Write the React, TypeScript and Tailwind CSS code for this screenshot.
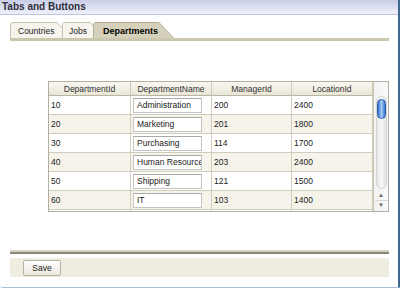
const rows = [
  { id: '10', name: 'Administration', mgr: '200', loc: '2400' },
  { id: '20', name: 'Marketing', mgr: '201', loc: '1800' },
  { id: '30', name: 'Purchasing', mgr: '114', loc: '1700' },
  { id: '40', name: 'Human Resources', mgr: '203', loc: '2400' },
  { id: '50', name: 'Shipping', mgr: '121', loc: '1500' },
  { id: '60', name: 'IT', mgr: '103', loc: '1400' },
  { id: '', name: '', mgr: '', loc: '' },
];

function Tab({ label, width, pad, active, overlap }: { label: string; width: number; pad: number; active?: boolean; overlap: number }) {
  const h = 16;
  return (
    <div className="relative h-[16px] shrink-0" style={{ width, marginLeft: -overlap }}>
      <svg className="absolute inset-0" width={width} height={h} viewBox={`0 0 ${width} ${h}`}>
        <path
          d={`M0.5 ${h} V3 Q0.5 0.5 3 0.5 H${width - 15} L${width - 0.5} ${h}`}
          fill={active ? '#d6d1bb' : '#f6f4ec'}
          stroke={active ? '#b3ad94' : '#c6c2ad'}
        />
      </svg>
      <span
        className={`relative block leading-[16px] pt-[1px] ${active ? 'font-bold text-[9px] text-black' : 'text-[8.5px] text-[#222]'}`}
        style={{ paddingLeft: pad }}
      >
        {label}
      </span>
    </div>
  );
}

export default function App() {
  return (
    <div className="w-[400px] h-[290px] bg-white font-['Liberation_Sans',Arial,sans-serif] text-[#222]">
      <div className="w-[400px] h-[288px] flex flex-col border-r-2 border-r-[#3f6891] border-b border-b-[#a6bfdc] rounded-bl-[3px]">
        {/* title */}
        <div className="h-[15px] shrink-0 bg-gradient-to-b from-[#c9cde6] to-[#eef0fb] border-b border-[#bfc4dc] pl-[2px] text-[10px] font-bold leading-[14px] text-[#2e2e3a]">
          Tabs and Buttons
        </div>

        <div className="flex flex-col pl-[10px] pr-[9px]">
          {/* tabs */}
          <div className="flex mt-[7px] h-[16px]">
            <Tab label="Countries" width={62} pad={8} overlap={0} />
            <Tab label="Jobs" width={43} pad={7} overlap={10} />
            <Tab label="Departments" width={81} pad={10} overlap={12} active />
          </div>
          <div className="h-[3px] bg-[#cbc7af]" />

          {/* table */}
          <div className="mt-[40px] ml-[38px] h-[131px] flex border border-[#b2afa1] overflow-hidden text-[8.5px]">
            <div className="flex-1 flex flex-col">
              <div className="grid grid-cols-[82px_81px_80px_81px] h-[14px] shrink-0 bg-gradient-to-b from-[#f8f7f0] to-[#e9e6d7] border-b border-[#b8b5a3]">
                {['DepartmentId', 'DepartmentName', 'ManagerId', 'LocationId'].map((c) => (
                  <div key={c} className="border-r border-[#cbc8b8] text-center leading-[14px] text-[#333]">
                    {c}
                  </div>
                ))}
              </div>
              {rows.map((r, i) => (
                <div
                  key={i}
                  className={`grid grid-cols-[82px_81px_80px_81px] h-[19px] shrink-0 border-b border-[#d0cdbd] ${i % 2 === 1 ? 'bg-[#f5f3ea]' : 'bg-white'}`}
                >
                  <div className="border-r border-[#d0cdbd] pl-[2px] leading-[19px]">{r.id}</div>
                  <div className="border-r border-[#d0cdbd] flex items-center pl-[2px]">
                    <div className="w-[69px] h-[15px] bg-white border border-[#c4c4c4] border-t-[#a9a9a9] pl-[3px] leading-[13px] overflow-hidden whitespace-nowrap">
                      {r.name}
                    </div>
                  </div>
                  <div className="border-r border-[#d0cdbd] pl-[2px] leading-[19px]">{r.mgr}</div>
                  <div className="border-r border-[#d0cdbd] pl-[2px] leading-[19px]">{r.loc}</div>
                </div>
              ))}
            </div>

            {/* scrollbar */}
            <div className="w-[15px] shrink-0 flex flex-col bg-gradient-to-r from-[#f2f2f2] to-[#fafafa] border-l border-[#c9c6b6]">
              <div className="h-[14px] shrink-0" />
              <div className="flex-1 flex flex-col items-center">
                <div className="relative w-[11px] h-[93px] rounded-full bg-gradient-to-r from-[#e6e6e6] via-[#f7f7f7] to-[#e3e3e3] border border-[#d4d4d4]">
                  <div className="absolute left-[0px] top-[2px] w-[9px] h-[20px] rounded-full border border-[#2b5fad] bg-gradient-to-r from-[#2f6fd0] via-[#a7cbf6] to-[#3674d2]" />
                </div>
                <div className="mt-[2px] text-[6px] leading-[8px] text-[#666]">▲</div>
                <div className="w-[13px] border-t border-[#d6d6d6] mt-[1px]" />
                <div className="text-[6px] leading-[8px] text-[#666]">▼</div>
              </div>
            </div>
          </div>

          {/* separator */}
          <div className="mt-[38px] h-[4px] border-t-2 border-[#d5d2bf] border-b-2 border-b-[#8a877a]" />

          {/* button bar */}
          <div className="mt-[4px] h-[19px] bg-[#efece0] flex items-center pl-[13px]">
            <button className="w-[38px] h-[16px] bg-gradient-to-b from-white to-[#ebe8dc] border border-[#b5b2a4] rounded-[2px] text-[8.5px] leading-[14px] text-[#222]">
              Save
            </button>
          </div>
        </div>
      </div>
    </div>
  );
}
